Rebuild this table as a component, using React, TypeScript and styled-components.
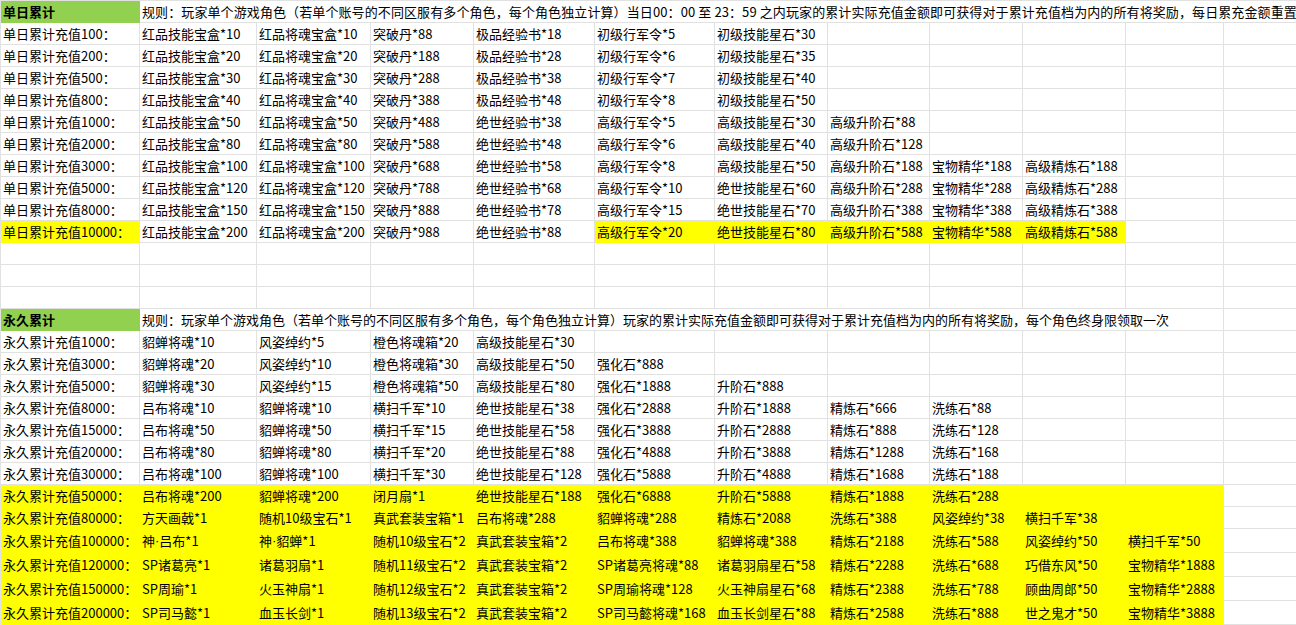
import styled, { createGlobalStyle } from "styled-components";

const GRID = "#e1e1e1";
const GREEN = "#92d050";
const YELLOW = "#ffff00";

const COLS = [139, 117, 114, 103, 121, 120, 113, 102, 93, 103, 98, 120];

const GlobalStyle = createGlobalStyle`
  html, body {
    margin: 0;
    padding: 0;
    background: #fff;
    overflow: hidden;
  }
  body {
    font-family: "Noto Sans CJK SC", "Microsoft YaHei", sans-serif;
    font-size: 13px;
    color: #000;
  }
`;

const Sheet = styled.div`
  width: 1296px;
  height: 625px;
  overflow: hidden;
  border-top: 1px solid ${GRID};
  border-left: 1px solid ${GRID};
`;

const Row = styled.div<{ $h: number }>`
  display: grid;
  grid-template-columns: ${COLS.map((w) => `${w}px`).join(" ")};
  height: ${(p) => p.$h}px;
`;

const Cell = styled.div<{ $fill?: string; $bold?: boolean; $span?: number }>`
  box-sizing: border-box;
  grid-column: span ${(p) => p.$span || 1};
  display: flex;
  align-items: center;
  padding: 0 2px;
  white-space: nowrap;
  overflow: hidden;
  line-height: 1;
  background: ${(p) => p.$fill || "#fff"};
  border-right: 1px solid ${(p) => p.$fill || GRID};
  border-bottom: 1px solid ${(p) => p.$fill || GRID};
  font-weight: ${(p) => (p.$bold ? "bold" : "normal")};
`;

// the narrow middle dot in 神·吕布
const Dot = styled.span`
  font-family: "Liberation Sans", sans-serif;
`;

const RuleText = styled.span`
  letter-spacing: 0.1px;
`;

type Line = {
  label: string;
  items: string[];
  labelFill?: string;
  fillFrom?: number;
  fillTo?: number;
  h?: number;
};

const daily: Line[] = [
  { label: "单日累计充值100：", items: ["红品技能宝盒*10", "红品将魂宝盒*10", "突破丹*88", "极品经验书*18", "初级行军令*5", "初级技能星石*30"] },
  { label: "单日累计充值200：", items: ["红品技能宝盒*20", "红品将魂宝盒*20", "突破丹*188", "极品经验书*28", "初级行军令*6", "初级技能星石*35"] },
  { label: "单日累计充值500：", items: ["红品技能宝盒*30", "红品将魂宝盒*30", "突破丹*288", "极品经验书*38", "初级行军令*7", "初级技能星石*40"] },
  { label: "单日累计充值800：", items: ["红品技能宝盒*40", "红品将魂宝盒*40", "突破丹*388", "极品经验书*48", "初级行军令*8", "初级技能星石*50"] },
  { label: "单日累计充值1000：", items: ["红品技能宝盒*50", "红品将魂宝盒*50", "突破丹*488", "绝世经验书*38", "高级行军令*5", "高级技能星石*30", "高级升阶石*88"] },
  { label: "单日累计充值2000：", items: ["红品技能宝盒*80", "红品将魂宝盒*80", "突破丹*588", "绝世经验书*48", "高级行军令*6", "高级技能星石*40", "高级升阶石*128"] },
  { label: "单日累计充值3000：", items: ["红品技能宝盒*100", "红品将魂宝盒*100", "突破丹*688", "绝世经验书*58", "高级行军令*8", "高级技能星石*50", "高级升阶石*188", "宝物精华*188", "高级精炼石*188"] },
  { label: "单日累计充值5000：", items: ["红品技能宝盒*120", "红品将魂宝盒*120", "突破丹*788", "绝世经验书*68", "高级行军令*10", "绝世技能星石*60", "高级升阶石*288", "宝物精华*288", "高级精炼石*288"] },
  { label: "单日累计充值8000：", items: ["红品技能宝盒*150", "红品将魂宝盒*150", "突破丹*888", "绝世经验书*78", "高级行军令*15", "绝世技能星石*70", "高级升阶石*388", "宝物精华*388", "高级精炼石*388"] },
  {
    label: "单日累计充值10000：",
    items: ["红品技能宝盒*200", "红品将魂宝盒*200", "突破丹*988", "绝世经验书*88", "高级行军令*20", "绝世技能星石*80", "高级升阶石*588", "宝物精华*588", "高级精炼石*588"],
    labelFill: YELLOW,
    fillFrom: 4,
    fillTo: 8,
  },
];

const forever: Line[] = [
  { label: "永久累计充值1000：", items: ["貂蝉将魂*10", "风姿绰约*5", "橙色将魂箱*20", "高级技能星石*30"] },
  { label: "永久累计充值3000：", items: ["貂蝉将魂*20", "风姿绰约*10", "橙色将魂箱*30", "高级技能星石*50", "强化石*888"] },
  { label: "永久累计充值5000：", items: ["貂蝉将魂*30", "风姿绰约*15", "橙色将魂箱*50", "高级技能星石*80", "强化石*1888", "升阶石*888"] },
  { label: "永久累计充值8000：", items: ["吕布将魂*10", "貂蝉将魂*10", "横扫千军*10", "绝世技能星石*38", "强化石*2888", "升阶石*1888", "精炼石*666", "洗练石*88"] },
  { label: "永久累计充值15000：", items: ["吕布将魂*50", "貂蝉将魂*50", "横扫千军*15", "绝世技能星石*58", "强化石*3888", "升阶石*2888", "精炼石*888", "洗练石*128"] },
  { label: "永久累计充值20000：", items: ["吕布将魂*80", "貂蝉将魂*80", "横扫千军*20", "绝世技能星石*88", "强化石*4888", "升阶石*3888", "精炼石*1288", "洗练石*168"] },
  { label: "永久累计充值30000：", items: ["吕布将魂*100", "貂蝉将魂*100", "横扫千军*30", "绝世技能星石*128", "强化石*5888", "升阶石*4888", "精炼石*1688", "洗练石*188"] },
  { label: "永久累计充值50000：", labelFill: YELLOW, fillFrom: 0, fillTo: 9, items: ["吕布将魂*200", "貂蝉将魂*200", "闭月扇*1", "绝世技能星石*188", "强化石*6888", "升阶石*5888", "精炼石*1888", "洗练石*288"] },
  { label: "永久累计充值80000：", labelFill: YELLOW, fillFrom: 0, fillTo: 9, items: ["方天画戟*1", "随机10级宝石*1", "真武套装宝箱*1", "吕布将魂*288", "貂蝉将魂*288", "精炼石*2088", "洗练石*388", "风姿绰约*38", "横扫千军*38"] },
  { label: "永久累计充值100000：", labelFill: YELLOW, fillFrom: 0, fillTo: 9, h: 24, items: ["神·吕布*1", "神·貂蝉*1", "随机10级宝石*2", "真武套装宝箱*2", "吕布将魂*388", "貂蝉将魂*388", "精炼石*2188", "洗练石*588", "风姿绰约*50", "横扫千军*50"] },
  { label: "永久累计充值120000：", labelFill: YELLOW, fillFrom: 0, fillTo: 9, h: 24, items: ["SP诸葛亮*1", "诸葛羽扇*1", "随机11级宝石*2", "真武套装宝箱*2", "SP诸葛亮将魂*88", "诸葛羽扇星石*58", "精炼石*2288", "洗练石*688", "巧借东风*50", "宝物精华*1888"] },
  { label: "永久累计充值150000：", labelFill: YELLOW, fillFrom: 0, fillTo: 9, h: 24, items: ["SP周瑜*1", "火玉神扇*1", "随机12级宝石*2", "真武套装宝箱*2", "SP周瑜将魂*128", "火玉神扇星石*68", "精炼石*2388", "洗练石*788", "顾曲周郎*50", "宝物精华*2888"] },
  { label: "永久累计充值200000：", labelFill: YELLOW, fillFrom: 0, fillTo: 9, h: 24, items: ["SP司马懿*1", "血玉长剑*1", "随机13级宝石*2", "真武套装宝箱*2", "SP司马懿将魂*168", "血玉长剑星石*88", "精炼石*2588", "洗练石*888", "世之鬼才*50", "宝物精华*3888"] },
];

const renderText = (text: string) => {
  if (!text.includes("·")) return text;
  const [a, b] = text.split("·");
  return (
    <>
      {a}
      <Dot>·</Dot>
      {b}
    </>
  );
};

const DataRow = ({ line }: { line: Line }) => {
  const cells = Array.from({ length: COLS.length - 1 }, (_, i) => line.items[i] || "");
  return (
    <Row $h={line.h || 22}>
      <Cell $fill={line.labelFill}>{line.label}</Cell>
      {cells.map((text, i) => {
        const filled =
          line.fillFrom !== undefined && line.fillTo !== undefined && i >= line.fillFrom && i <= line.fillTo;
        return (
          <Cell key={i} $fill={filled ? YELLOW : undefined}>
            {renderText(text)}
          </Cell>
        );
      })}
    </Row>
  );
};

const EmptyRow = () => (
  <Row $h={22}>
    {COLS.map((_, i) => (
      <Cell key={i} />
    ))}
  </Row>
);

const App = () => {
  return (
    <>
      <GlobalStyle />
      <Sheet>
        <Row $h={22}>
          <Cell $fill={GREEN} $bold>
            单日累计
          </Cell>
          <Cell $span={11}>
            <RuleText>
              规则：玩家单个游戏角色（若单个账号的不同区服有多个角色，每个角色独立计算）当日00：00 至 23：59 之内玩家的累计实际充值金额即可获得对于累计充值档为内的所有将奖励，每日累充金额重置
            </RuleText>
          </Cell>
        </Row>
        {daily.map((line) => (
          <DataRow key={line.label} line={line} />
        ))}
        <EmptyRow />
        <EmptyRow />
        <EmptyRow />
        <Row $h={22}>
          <Cell $fill={GREEN} $bold>
            永久累计
          </Cell>
          <Cell $span={10}>
            规则：玩家单个游戏角色（若单个账号的不同区服有多个角色，每个角色独立计算）玩家的累计实际充值金额即可获得对于累计充值档为内的所有将奖励，每个角色终身限领取一次
          </Cell>
          <Cell />
        </Row>
        {forever.map((line) => (
          <DataRow key={line.label} line={line} />
        ))}
      </Sheet>
    </>
  );
};

export default App;
